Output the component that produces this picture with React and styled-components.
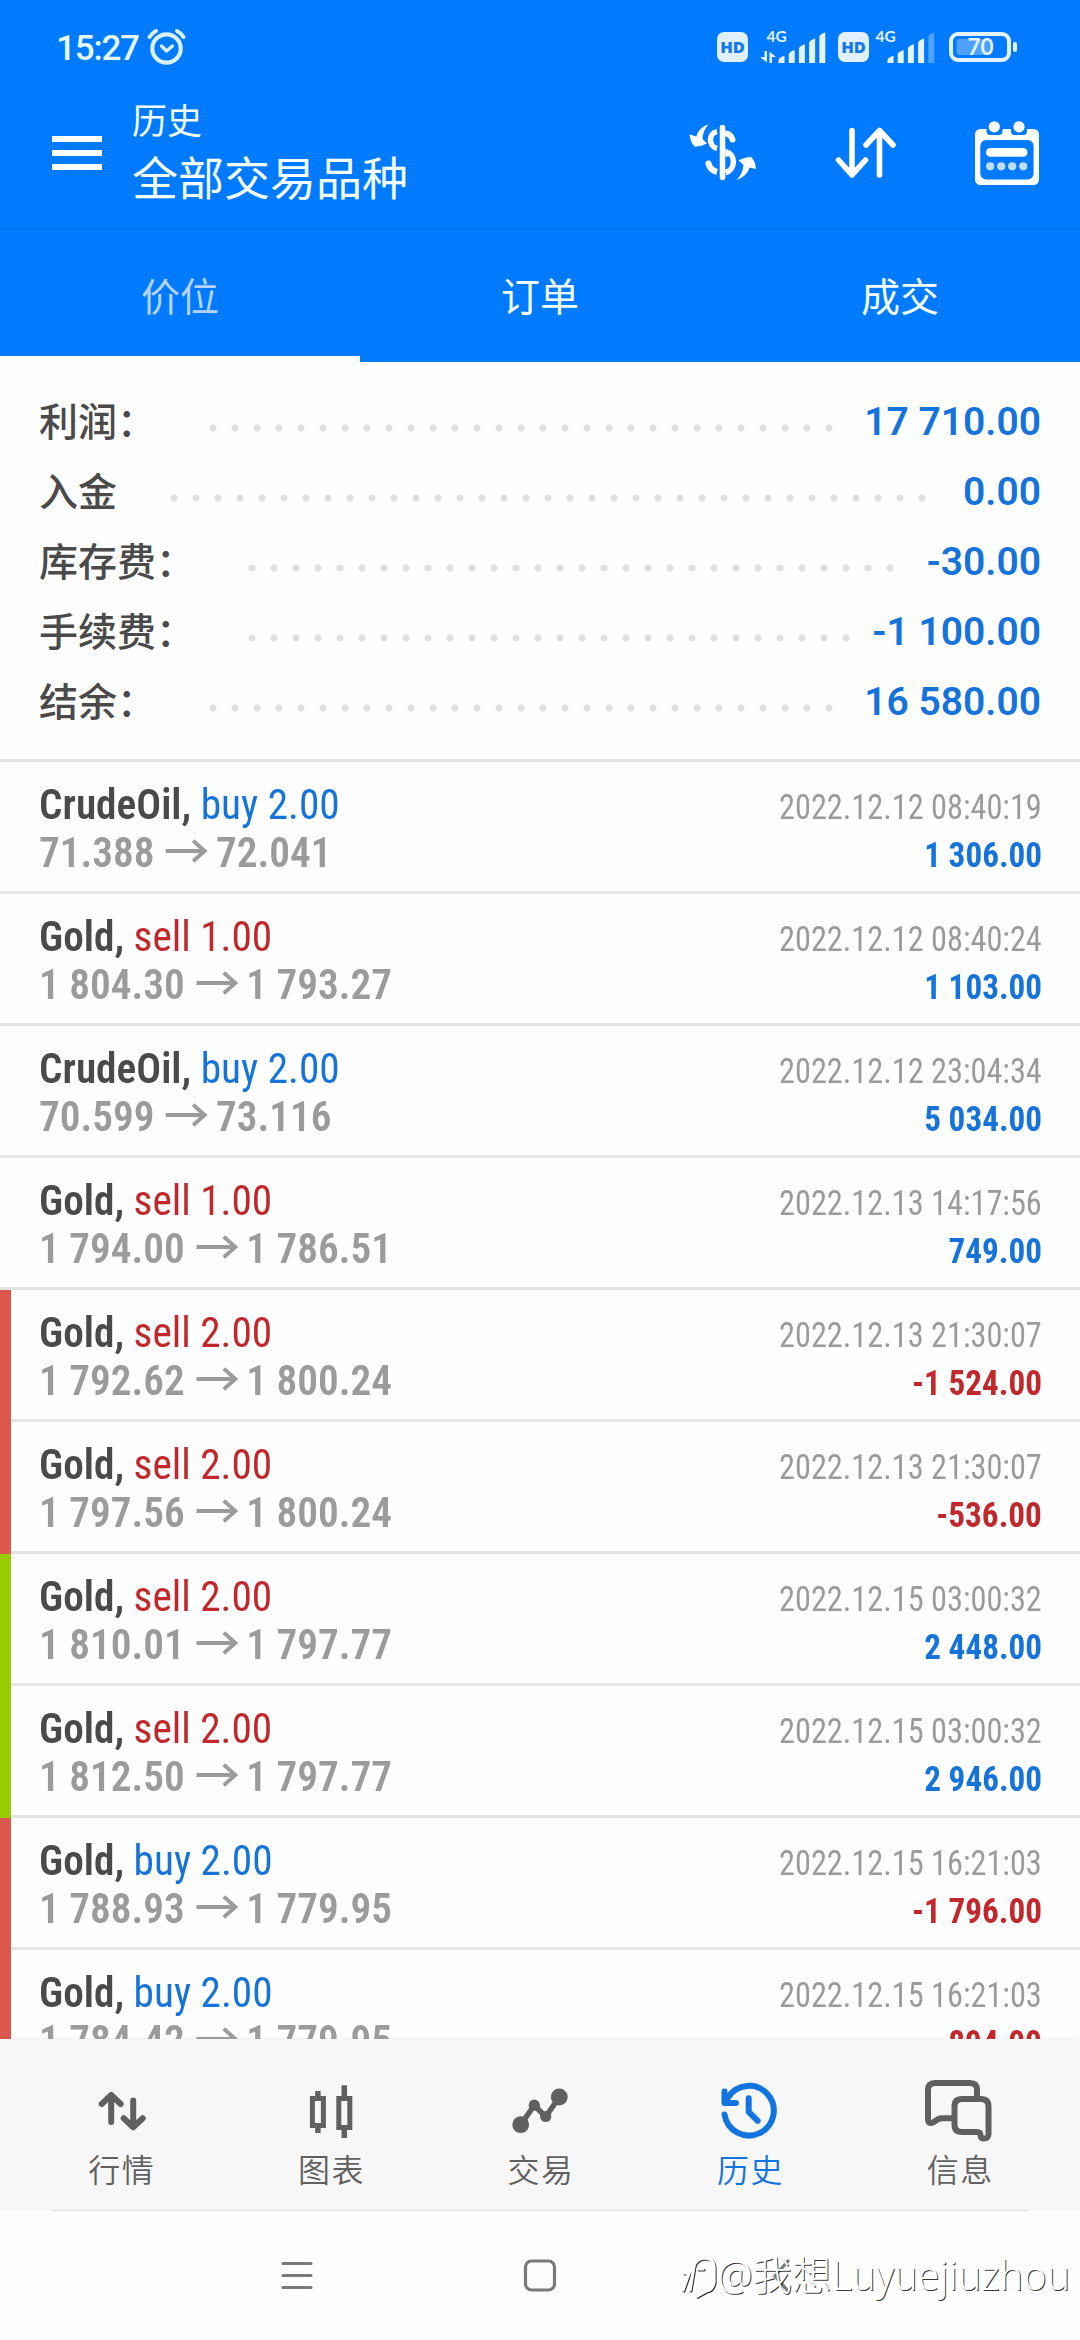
import React from "react";
import styled, { createGlobalStyle } from "styled-components";

const summary = [
  { label: "利润：", value: "17 710.00", dots: 29 },
  { label: "入金", value: "0.00", dots: 35 },
  { label: "库存费：", value: "-30.00", dots: 30 },
  { label: "手续费：", value: "-1 100.00", dots: 28 },
  { label: "结余：", value: "16 580.00", dots: 29 },
];

const RED = "#dc584c";
const GREEN = "#99cc00";

const deals = [
  { symbol: "CrudeOil", side: "buy", lots: "2.00", open: "71.388", close: "72.041", time: "2022.12.12 08:40:19", profit: "1 306.00" },
  { symbol: "Gold", side: "sell", lots: "1.00", open: "1 804.30", close: "1 793.27", time: "2022.12.12 08:40:24", profit: "1 103.00" },
  { symbol: "CrudeOil", side: "buy", lots: "2.00", open: "70.599", close: "73.116", time: "2022.12.12 23:04:34", profit: "5 034.00" },
  { symbol: "Gold", side: "sell", lots: "1.00", open: "1 794.00", close: "1 786.51", time: "2022.12.13 14:17:56", profit: "749.00" },
  { symbol: "Gold", side: "sell", lots: "2.00", open: "1 792.62", close: "1 800.24", time: "2022.12.13 21:30:07", profit: "-1 524.00", mark: RED },
  { symbol: "Gold", side: "sell", lots: "2.00", open: "1 797.56", close: "1 800.24", time: "2022.12.13 21:30:07", profit: "-536.00", mark: RED },
  { symbol: "Gold", side: "sell", lots: "2.00", open: "1 810.01", close: "1 797.77", time: "2022.12.15 03:00:32", profit: "2 448.00", mark: GREEN },
  { symbol: "Gold", side: "sell", lots: "2.00", open: "1 812.50", close: "1 797.77", time: "2022.12.15 03:00:32", profit: "2 946.00", mark: GREEN },
  { symbol: "Gold", side: "buy", lots: "2.00", open: "1 788.93", close: "1 779.95", time: "2022.12.15 16:21:03", profit: "-1 796.00", mark: RED },
  { symbol: "Gold", side: "buy", lots: "2.00", open: "1 784.42", close: "1 779.95", time: "2022.12.15 16:21:03", profit: "-894.00", mark: RED },
];

const AlarmIcon = () => (
  <svg width="40" height="38" viewBox="0 0 40 38" fill="none" stroke="#d9f0ff" strokeLinecap="round">
    <circle cx="19.5" cy="20.5" r="14.2" strokeWidth="4.2" />
    <path d="M14.5 18l5 5 6-5" strokeWidth="3.4" strokeLinejoin="round" />
    <path d="M2.5 9Q5 5 9 3M36.5 9Q34 5 30 3" strokeWidth="4" />
  </svg>
);

const Signal = ({ level, data }) => (
  <svg width="67" height="34" viewBox="0 0 67 34" fill="#e4f3ff">
    <text x="6.5" y="12.3" fontSize="15.5" fontFamily="Lato, sans-serif" fontWeight="700">
      4G
    </text>
    {data && <path d="M4.5 21h2.5v11.5L0 27h4.5zM9.5 33V21.5L16 27h-4v6z" />}
    {[0, 1, 2, 3, 4].map((i) => (
      <path
        key={i}
        opacity={i < level ? 1 : 0.35}
        d={`M${18.5 + i * 10.2} 33v${-(3 + i * 5.8)}q1-3 6-4.2v${7.2 + i * 5.8}z`}
      />
    ))}
  </svg>
);

const Battery = () => (
  <svg width="69" height="30" viewBox="0 0 69 30">
    <rect x="2" y="2" width="58" height="26" rx="7" fill="none" stroke="#e4f3ff" strokeWidth="4" />
    <rect x="7.5" y="7" width="33" height="16" rx="3" fill="#fff" opacity="0.3" />
    <rect x="64" y="10" width="4" height="10" rx="2" fill="#e4f3ff" />
    <text x="18.5" y="23" fontSize="22.5" fontFamily="Lato, sans-serif" fontWeight="700" fill="#e4f3ff">
      70
    </text>
  </svg>
);

const MenuIcon = () => (
  <svg width="50" height="34" viewBox="0 0 50 34" fill="#fff">
    <path d="M0 0h50v6H0zM0 14h50v6H0zM0 28h50v6H0z" />
  </svg>
);

const DollarIcon = () => (
  <svg width="68" height="58" viewBox="0 0 68 58" fill="none" stroke="#fff">
    <path d="M33.5 3.5v50" strokeWidth="5.5" strokeLinecap="round" />
    <path d="M28 7.8C19.5 9 19 22 28 24.5" strokeWidth="5.5" />
    <path d="M36.5 9.5Q42 10 43.5 15.500" strokeWidth="6" strokeLinecap="round" />
    <path d="M36.5 28C47 29 47 46 36.5 48.5" strokeWidth="5.5" />
    <path d="M36.5 23.5v10L41 31z" fill="#fff" stroke="none" />
    <path d="M19.5 39.5Q21 46 28 48" strokeWidth="6" />
    <circle cx="19.5" cy="39.5" r="3" fill="#fff" stroke="none" />
    <path d="M19.5.5C15 1.5 9 5.500 7.500 12.5L.5 10.5Q1.5 18.5 5.5 22.5Q11 23 18 19.500L13.500 15Q14 6 19.500.5z" fill="#fff" stroke="none" />
    <path d="M47.5 56C53 54.5 59.5 49 60.5 43.5L67 45Q66 36 62 33Q56 33 49.5 36.5L54.500 41Q54 49.5 47.5 56z" fill="#fff" stroke="none" />
  </svg>
);

const SortIcon = () => (
  <svg width="62" height="52" viewBox="0 0 62 52" fill="none" stroke="#fff" strokeWidth="5.6" strokeLinecap="round" strokeLinejoin="round">
    <path d="M17 3.5V48M3.5 33L17 48l13.5-15M44.5 48V3.5M31 18L44.5 3.5L58 18" />
  </svg>
);

const CalendarIcon = () => (
  <svg width="64" height="64" viewBox="0 0 64 64" fill="#fff">
    <rect x="0" y="8" width="64" height="56" rx="5.5" />
    <rect x="5.3" y="19" width="53.3" height="39.5" rx="6" fill="#007aff" />
    <path d="M11.5 6v4q0 4 3.5 4h9q3.5 0 3.5-4V6zM36 6v4q0 4 3.5 4h9q3.5 0 3.5-4V6z" fill="#007aff" />
    <circle cx="19.3" cy="5.8" r="5.6" />
    <circle cx="44" cy="5.8" r="5.6" />
    <rect x="11" y="27" width="41.5" height="8.8" rx="4.4" />
    <g opacity="0.75">
      <circle cx="15.2" cy="45.3" r="4.1" />
      <circle cx="26.2" cy="45.3" r="4.1" />
      <circle cx="37.2" cy="45.3" r="4.1" />
      <circle cx="48.2" cy="45.3" r="4.1" />
    </g>
  </svg>
);

const ArrowIcon = () => (
  <svg width="44" height="24" viewBox="0 0 44 24" fill="none" stroke="#9b9b9b" strokeWidth="4">
    <path d="M0 12h41M28.5 1.8L40.5 12L28.5 22.2" />
  </svg>
);

const QuotesIcon = () => (
  <path d="M25.2 42V15.5M15.7 24l9.5-9 9.5 9M47.2 20.5V47M37.7 38.3l9.5 9 9.5-9" />
);

const ChartIcon = () => (
  <g strokeLinecap="butt" strokeLinejoin="miter" strokeWidth="5">
    <path d="M17.4 18.5h11v27h-11zM43.8 18.5h11v29h-11z" />
    <path d="M22.9 11v7M22.9 46v7M49.3 5.3V18M49.3 48v10" strokeWidth="5.5" />
  </g>
);

const TradeIcon = () => (
  <g fill="currentColor">
    <path d="M15.7 44.7L29.3 25.2L40.7 36.7L54.3 17" fill="none" strokeWidth="5.5" />
    <g stroke="none">
      <circle cx="15.7" cy="44.7" r="8.4" />
      <circle cx="29.3" cy="25.2" r="5.6" />
      <circle cx="40.7" cy="36.5" r="5.6" />
      <circle cx="54.3" cy="17" r="8.4" />
    </g>
  </g>
);

const HistoryIcon = () => (
  <path d="M9.5 34.5A24.8 24.8 0 1 0 13 17.5L9.5 22.8M9.5 11.5V23H21M33.7 18.3v13.5l9 9" />
);

const MessagesIcon = () => (
  <path d="M53 16V10q0-7-7-7H11Q4 3 4 10v29q0 5.5 5 3.5l5-3.2q2-1 5-1h9M38 19h19q7.500 0 7.5 7.5V54q0 5-5 4.500q-3-.5-3-3.5q0-3-4-3H38q-7.500 0-7.5-7.500v-18Q30.500 19 38 19z" />
);

const tabs = [
  { name: "行情", Icon: QuotesIcon },
  { name: "图表", Icon: ChartIcon },
  { name: "交易", Icon: TradeIcon },
  { name: "历史", Icon: HistoryIcon, active: true },
  { name: "信息", Icon: MessagesIcon },
];

const App = () => {
  return (
    <Screen>
      <GlobalStyle />
      <Header>
        <StatusBar>
          <Clock>15:27</Clock>
          <AlarmIcon />
          <StatusRight>
            <HdBadge>HD</HdBadge>
            <Signal level={5} data />
            <HdBadge>HD</HdBadge>
            <Signal level={4} />
            <Battery />
          </StatusRight>
        </StatusBar>
        <Toolbar>
          <MenuIcon />
          <Titles>
            <SmallTitle>历史</SmallTitle>
            <BigTitle>全部交易品种</BigTitle>
          </Titles>
          <Actions>
            <DollarIcon />
            <SortIcon />
            <CalendarIcon />
          </Actions>
        </Toolbar>
      </Header>
      <TabBar>
        <Tab $active>价位</Tab>
        <Tab>订单</Tab>
        <Tab>成交</Tab>
      </TabBar>
      <Summary>
        {summary.map((item) => (
          <SummaryRow key={item.label}>
            <SummaryLabel>{item.label}</SummaryLabel>
            <Dots $count={item.dots} />
            <SummaryValue>{item.value}</SummaryValue>
          </SummaryRow>
        ))}
      </Summary>
      <DealList>
        {deals.map((deal, i) => (
          <Deal key={i}>
            <Mark $color={deal.mark} />
            <DealBody>
              <DealLine>
                <Name>
                  {deal.symbol}, <Side $side={deal.side}>{deal.side} {deal.lots}</Side>
                </Name>
                <Time>{deal.time}</Time>
              </DealLine>
              <DealLine>
                <Prices>
                  {deal.open}
                  <ArrowIcon />
                  {deal.close}
                </Prices>
                <Profit $loss={deal.profit.startsWith("-")}>{deal.profit}</Profit>
              </DealLine>
            </DealBody>
          </Deal>
        ))}
      </DealList>
      <BottomNav>
        {tabs.map(({ name, Icon, active }) => (
          <NavItem key={name} $active={active}>
            <NavIcon viewBox="0 0 72 62">
              <Icon />
            </NavIcon>
            {name}
          </NavItem>
        ))}
      </BottomNav>
      <SystemNav>
        <svg width="32" height="34" viewBox="0 0 32 34">
          <path d="M2 4.500h28M2 16.500h28M2 28.500h28" />
        </svg>
        <svg width="34" height="34" viewBox="0 0 34 34">
          <rect x="2.5" y="2" width="29" height="29" rx="6" />
        </svg>
        <svg width="32" height="34" viewBox="0 0 32 34">
          <path d="M21 2L8 17l13 15" />
        </svg>
        <Watermark>
          <svg width="36" height="46" viewBox="0 0 36 46">
            <path d="M2 38L8 21H3M9 38L13 14Q15 7 23 6q10 0 10 10v14q-1 8-8 9l-9 5M17 17h5" />
          </svg>
          <span>@我想Luyuejiuzhou</span>
        </Watermark>
      </SystemNav>
    </Screen>
  );
};

export default App;

const GlobalStyle = createGlobalStyle`
  * {
    box-sizing: border-box;
  }

  body {
    margin: 0;
    background: #fff;
  }

  svg {
    display: block;
    flex: none;
    overflow: visible;
  }
`;

const Screen = styled.div`
  width: 1080px;
  height: 2340px;
  display: flex;
  flex-direction: column;
  overflow: hidden;
  background: #fefefe;
  font-family: Roboto, "Noto Sans CJK SC", sans-serif;
  white-space: nowrap;
`;

const Header = styled.div`
  height: 230px;
  flex: none;
  background: #007aff;
  border-bottom: 2px solid #0271ea;
`;

const StatusBar = styled.div`
  height: 94px;
  padding: 0 62px 0 56px;
  display: flex;
  align-items: center;
`;

const Clock = styled.div`
  width: 91px;
  color: #e4f7ff;
  font-size: 35px;
  font-weight: 500;
  letter-spacing: -1.2px;
  padding-top: 2px;
`;

const StatusRight = styled.div`
  margin-left: auto;
  display: flex;
  align-items: center;

  svg:nth-child(2) {
    margin: 0 11px 0 12px;
  }

  svg:nth-child(4) {
    margin: 0 13px 0 0;
  }
`;

const HdBadge = styled.div`
  width: 31px;
  height: 30px;
  border-radius: 7px;
  background: #e0f0ff;
  color: #1478e8;
  font: 800 16.5px/30px "Open Sans", sans-serif;
  text-align: center;
`;

const Toolbar = styled.div`
  height: 118px;
  padding: 0 41px 0 52px;
  display: flex;
  align-items: center;
`;

const Titles = styled.div`
  margin-left: 30px;
  color: #f2feff;
`;

const SmallTitle = styled.div`
  padding-top: 1px;
  font-size: 35px;
  line-height: 50px;
`;

const BigTitle = styled.div`
  font-size: 46px;
  line-height: 62px;
`;

const Actions = styled.div`
  margin-left: auto;
  display: flex;
  align-items: center;
  gap: 78px;
`;

const TabBar = styled.div`
  height: 132px;
  flex: none;
  display: flex;
  background: #007aff;
`;

const Tab = styled.div`
  flex: 1;
  display: flex;
  justify-content: center;
  align-items: center;
  padding-top: ${(p) => (p.$active ? "9px" : "3px")};
  border-bottom: ${(p) => (p.$active ? "6px solid #fefefe" : "none")};
  color: ${(p) => (p.$active ? "#b3d3fa" : "#f2feff")};
  font-size: 39px;
  line-height: 40px;
`;

const Summary = styled.div`
  flex: none;
  height: 400px;
  padding: 24px 39px 0;
  border-bottom: 3px solid #e4e4e4;
`;

const SummaryRow = styled.div`
  height: 70px;
  display: flex;
  align-items: center;
`;

const SummaryLabel = styled.div`
  padding-bottom: 5px;
  color: #4a4a4a;
  font-family: "Noto Sans CJK SC", sans-serif;
  font-size: 39px;
  font-weight: 500;
`;

const Dots = styled.div`
  width: ${(p) => p.$count * 22}px;
  height: 22px;
  margin: 14px 0 0 46px;
  background: radial-gradient(circle, #e0e0e0 3px, transparent 4px) 0 0 / 22px 22px;
`;

const SummaryValue = styled.div`
  margin-left: auto;
  padding-top: 1px;
  color: #1673da;
  font-size: 39px;
  font-weight: 600;
`;

const DealList = styled.div`
  flex: 1;
  min-height: 0;
  overflow: hidden;
`;

const Deal = styled.div`
  height: 132px;
  display: flex;
`;

const Mark = styled.div`
  width: 11px;
  background: ${(p) => p.$color || "transparent"};
  border-bottom: ${(p) => (p.$color ? "none" : "3px solid #e4e4e4")};
`;

const DealBody = styled.div`
  flex: 1;
  padding: 18px 38px 0 28px;
  border-bottom: 3px solid #e4e4e4;
  font-family: "Roboto Condensed", Roboto, sans-serif;
`;

const DealLine = styled.div`
  height: 48px;
  line-height: 48px;
  display: flex;
  justify-content: space-between;
  align-items: baseline;
`;

const Name = styled.div`
  color: #4a4a4a;
  font-size: 43px;
  font-weight: 600;
  transform: scaleX(0.96);
  transform-origin: left;
`;

const Side = styled.span`
  color: ${(p) => (p.$side === "buy" ? "#1673da" : "#c1282b")};
  font-weight: 400;
`;

const Prices = styled.div`
  color: #9b9b9b;
  font-size: 43px;
  font-weight: 600;
  transform: scaleX(0.96);
  transform-origin: left;

  svg {
    display: inline-block;
    margin: 0 8px 0 12px;
    vertical-align: 4px;
  }
`;

const Time = styled.div`
  color: #9b9b9b;
  font-size: 35.5px;
  transform: scaleX(0.91);
  transform-origin: right;
`;

const Profit = styled.div`
  color: ${(p) => (p.$loss ? "#c1282b" : "#1673da")};
  font-size: 35.5px;
  font-weight: 700;
  transform: scaleX(0.935);
  transform-origin: right;
`;

const BottomNav = styled.div`
  height: 171px;
  flex: none;
  padding: 0 15px 0 17px;
  display: flex;
  background: #f7f7f7;
  box-shadow: 0 -1px 3px rgba(0, 0, 0, 0.05);
`;

const NavItem = styled.div`
  flex: 1;
  display: flex;
  flex-direction: column;
  align-items: center;
  padding-top: 41px;
  color: ${(p) => (p.$active ? "#1174df" : "#606060")};
  font-size: 32px;
  line-height: 58px;
  letter-spacing: 1.5px;
  font-weight: 350;
`;

const NavIcon = styled.svg`
  width: 72px;
  height: 62px;
  fill: none;
  stroke: currentColor;
  stroke-width: 6;
  stroke-linecap: round;
  stroke-linejoin: round;
`;

const SystemNav = styled.div`
  position: relative;
  height: 130px;
  flex: none;
  display: flex;
  align-items: center;
  justify-content: center;
  gap: 210px;
  margin: 0 52px;
  border-top: 1px solid #dedede;

  svg {
    fill: none;
    stroke: #7a7a7a;
    stroke-width: 3.2;
    stroke-linecap: round;
  }
`;

// sits over the system bar, across the back button
const Watermark = styled.div`
  position: absolute;
  right: -42px;
  top: 36px;
  display: flex;
  align-items: center;
  gap: 1px;
  color: #fff;
  font: 300 39.5px/56px "Noto Sans", "Noto Sans CJK SC", sans-serif;
  text-shadow: 1px 1px 0 rgba(0, 0, 0, 0.8);

  svg {
    stroke: #fff;
    filter: drop-shadow(1px 1px 0 rgba(0, 0, 0, 0.8));
  }
`;
